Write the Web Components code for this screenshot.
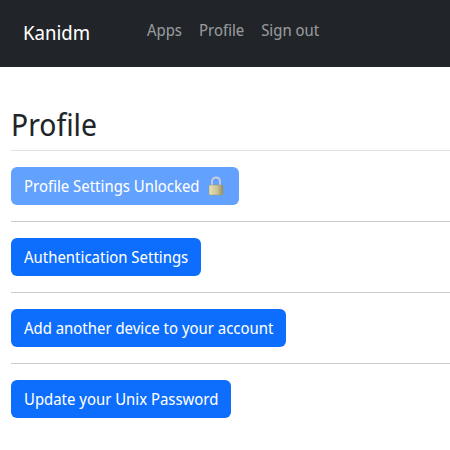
<!DOCTYPE html>
<html><head><meta charset="utf-8"><style>
html,body{margin:0;padding:0;background:#fff;overflow:hidden}
body{font-family:"Noto Sans Display","Noto Sans",sans-serif;font-size:15.8px;line-height:24px;color:#212529}
</style></head><body>
<template id="nav-t"><style>
:host{display:flex;align-items:flex-start;height:67px;background:#212529;box-sizing:border-box;padding:18px 0 0 23px}
.brand{font-size:19.7px;color:#fff;width:124px;line-height:30px}
nav{display:flex;gap:17px;line-height:24px}
::slotted(a){color:rgba(255,255,255,.55);text-decoration:none}
</style><span class="brand"><slot name="brand"></slot></span><nav><slot></slot></nav></template>
<template id="head-t"><style>
:host{display:block;padding-top:39px;margin-left:11px}
h2{margin:0 0 6px;font-size:30px;font-weight:400;line-height:38px;color:#212529}
hr{border:0;border-top:1px solid #dee2e6;margin:0}
</style><h2><slot></slot></h2><hr></template>
<template id="row-t"><style>
:host{display:block;margin-left:11px}
.b{display:inline-flex;align-items:center;gap:8px;background:#0d6efd;color:#fff;border-radius:6px;padding:0 13px;height:38px;white-space:nowrap;box-sizing:border-box}
:host([disabled]) .b{background:#62a1fe;padding-right:15px}
.w{padding-top:16px;display:flex}
hr{border:0;border-top:1px solid #ccc;margin:16px 0 0}
:host([last]) hr{display:none}
</style><div class="w"><span class="b"><slot></slot></span></div><hr></template>
<kanidm-nav><span slot="brand">Kanidm</span><a>Apps</a><a>Profile</a><a>Sign out</a></kanidm-nav>
<profile-head>Profile</profile-head>
<profile-row disabled>Profile Settings Unlocked <svg width="16" height="20" viewBox="0 0 16 20" aria-hidden="true"><defs><linearGradient id="g" x1="0" x2="1" y1="0" y2="0"><stop offset="0" stop-color="#e8e2b4"/><stop offset=".6" stop-color="#c9c493"/><stop offset="1" stop-color="#8f8b66"/></linearGradient></defs><path d="M4 9V5.5C4 3 5.5 1.5 8 1.5S12 3 12 5.5V9" fill="none" stroke="#c9ced6" stroke-width="1.8"/><rect x="1" y="9" width="14" height="10" rx="1" fill="url(#g)" stroke="#9a9670" stroke-width=".5"/></svg></profile-row>
<profile-row>Authentication Settings</profile-row>
<profile-row>Add another device to your account</profile-row>
<profile-row last>Update your Unix Password</profile-row>
<script>
for(const [n,t] of [['kanidm-nav','nav-t'],['profile-head','head-t'],['profile-row','row-t']]){
customElements.define(n,class extends HTMLElement{constructor(){super();this.attachShadow({mode:'open'}).appendChild(document.getElementById(t).content.cloneNode(true));}});
}
</script>
</body></html>
